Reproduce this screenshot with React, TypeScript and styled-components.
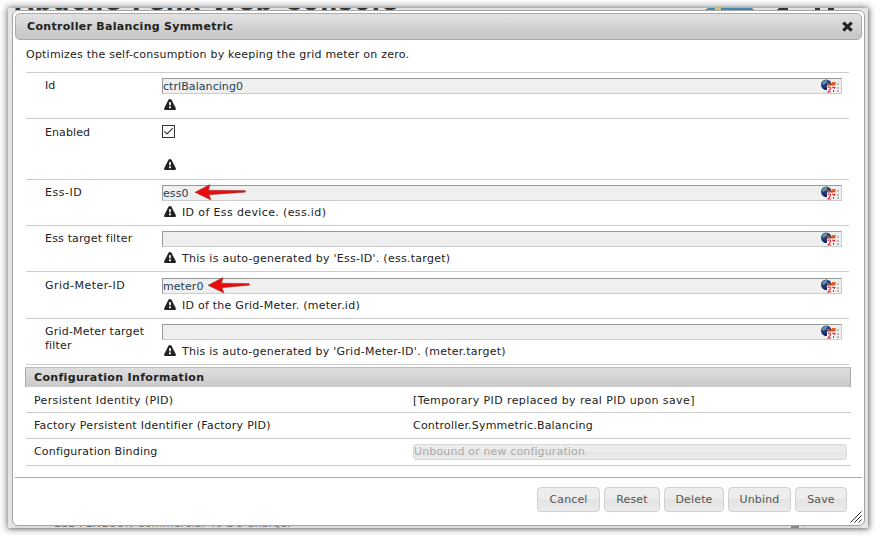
import React from 'react';
import styled, { createGlobalStyle } from 'styled-components';

const Global = createGlobalStyle`
  * { box-sizing: border-box; }
  body { margin: 0; background: #fff; font-family: "DejaVu Sans", Verdana, sans-serif; font-size: 11px; line-height: 14px; color: #222; overflow: hidden; }
`;

const Page = styled.div`
  width: 876px;
  height: 536px;
  padding: 8px;
`;

const Backdrop = styled.div`
  position: relative;
  width: 860px;
  height: 520px;
  padding: 2px 4px 2px 4px;
  background: #e4e4e4;
  box-shadow: 0 0 7px 1px rgba(0, 0, 0, 0.5), 1px 1px 3px rgba(0, 0, 0, 0.2);
`;

const Behind = styled.div`
  position: absolute;
  inset: 0;
  overflow: hidden;
`;

const BehindTitle = styled.div`
  position: absolute;
  left: 7px;
  top: -18px;
  font-size: 24px;
  line-height: 24px;
  font-weight: bold;
  letter-spacing: 1.25px;
  white-space: nowrap;
  color: #333;
`;

const BehindRow = styled.div`
  position: absolute;
  left: 7px;
  bottom: -3px;
  width: 846px;
  height: 14px;
  padding-left: 39px;
  white-space: nowrap;
  color: #777;
  background: #ddd;
  letter-spacing: 0.18px;
`;

const BehindArt = styled.svg`
  position: absolute;
  top: 0;
  left: 682px;
`;

const BehindCaret = styled.svg`
  position: absolute;
  right: 63px;
  bottom: 0;
`;

const Dialog = styled.div`
  position: relative;
  width: 853px;
  height: 516px;
  padding: 2px;
  background: #fff;
  border: 1px solid #a5a5a5;
  border-radius: 6px;
  display: flex;
  flex-direction: column;
`;

const TitleBar = styled.div`
  height: 27px;
  flex: none;
  padding: 0 8px 0 11px;
  display: flex;
  align-items: center;
  justify-content: space-between;
  border: 1px solid #aaa;
  border-radius: 5px;
  background: linear-gradient(#e2e2e2, #c8c8c8 85%);
  font-weight: bold;
`;

const Text = styled.span<{ $ls?: number }>`
  white-space: nowrap;
  letter-spacing: ${(p) => p.$ls ?? 0}px;
`;

const Body = styled.div`
  height: 437px;
  flex: none;
  padding: 0 10px;
`;

const Intro = styled.p`
  margin: 0;
  height: 32px;
  padding: 8px 1px 0;
`;

const Fields = styled.div`
  margin: 0 3px 0 1px;
  border-top: 1px solid #ccc;
`;

const FieldRow = styled.div<{ $h: number; $top: number }>`
  display: grid;
  grid-template-columns: 117px 680px;
  height: ${(p) => p.$h}px;
  padding: ${(p) => p.$top}px 0 0 19px;
  border-bottom: 1px solid #ccc;
`;

const Label = styled.div`
  padding-top: 1px;
`;

const Control = styled.div`
  display: flex;
  flex-direction: column;
`;

const Input = styled.div`
  height: 16px;
  flex: none;
  display: flex;
  align-items: center;
  background: #efefef;
  border: 1px solid #ccc;
  border-top-color: #999;
  border-left-color: #999;
  color: #1c4257;

  > span {
    padding-top: 1px;
  }

  > svg:last-child {
    margin-left: auto;
    margin-right: 2px;
  }
`;

const Check = styled.div`
  width: 13px;
  height: 13px;
  margin-bottom: 16px;
  border: 1px solid #333;
  display: flex;
`;

const Hint = styled.div`
  display: flex;
  align-items: flex-start;
  height: 14px;
  margin-top: 5px;
  padding-left: 2px;
  gap: 6px;
`;

const Section = styled.div`
  height: 20px;
  margin-top: 2px;
  margin-right: 1px;
  padding: 3px 8px;
  border: 1px solid #aaa;
  border-top-color: #bbb;
  border-bottom: 0;
  background: linear-gradient(#dedede, #c9c9c9);
  font-weight: bold;
`;

const InfoRow = styled.div<{ $h: number; $top?: number }>`
  display: grid;
  grid-template-columns: 379px 434px;
  height: ${(p) => p.$h}px;
  margin: 0 1px;
  padding: ${(p) => p.$top ?? 6}px 0 0 8px;
  border-bottom: 1px solid #ccc;
`;

const Binding = styled.div`
  height: 16px;
  margin-top: -1px;
  display: flex;
  align-items: center;
  border: 1px solid #d8d8d8;
  border-radius: 3px;
  background: linear-gradient(#ececec 50%, #e4e4e4 50%, #ebebeb);
  color: #aaa;
`;

const Footer = styled.div`
  flex: 1;
  display: flex;
  justify-content: flex-end;
  align-items: flex-start;
  gap: 4px;
  padding: 9px 15px 0 0;
  border-top: 1px solid #aaa;
`;

const Button = styled.button<{ $w: number }>`
  width: ${(p) => p.$w}px;
  height: 25px;
  padding: 0;
  border: 1px solid #d0d0d0;
  border-radius: 4px;
  background: linear-gradient(#ededed 50%, #e3e3e3 50%, #ebebeb);
  color: #555;
  font: 11px/14px "DejaVu Sans", Verdana, sans-serif;
  letter-spacing: 0.15px;
`;

const Grip = styled.svg`
  position: absolute;
  right: 2px;
  bottom: 2px;
`;

const CloseIcon = () => (
  <svg width="11" height="11" viewBox="0 0 11 11">
    <path d="M2.4 2.6 8.6 8.6M8.6 2.6 2.4 8.6" stroke="#222" strokeWidth="3.1" strokeLinecap="square" />
  </svg>
);

const WarnIcon = () => (
  <svg width="12" height="11" viewBox="0 0 12 11">
    <path d="M4.6 .6Q6-.5 7.4 .6L11.8 9.3Q12.2 11 11 11H1Q-.2 11 .2 9.3Z" fill="#222" />
    <path d="M5 3.2h2L6.7 6.6H5.3ZM5 7.6h2v1.6H5Z" fill="#fff" />
  </svg>
);

const FieldIcon = () => (
  <svg width="18" height="14" viewBox="0 0 18 14">
    <circle cx="5.3" cy="5.8" r="5.3" fill="#203b78" />
    <path d="M1 4Q3 .5 6.5 1.2Q7 3 4 5Q1 7 1 4Z" fill="#6594ae" />
    <path d="M2 8Q4 10 7 9L5 11Q2 10 2 8Z" fill="#14194e" />
    <path d="M5 4.5 8 3.5 10 5 12 3H15V6L11 7.2 7 6.5Z" fill="#bd4a1c" />
    <path d="M11 3h4v2h-4z" fill="#e56a24" />
    <path d="M6 6.5h8V14H6z" fill="#fff" />
    <path d="M7 9Q7 7.8 8.3 7.8 9.6 7.8 9.6 9 9.6 10 7 13H10M11 8.2h2.8L12.8 10M12.5 11v2" fill="none" stroke="#e91520" strokeWidth="1.1" />
    <path d="M14 4h1v2h-1zM16 4h2v2h-2zM16 8h2v2h-2zM16 11h2v2h-2zM14 8h1v1h-1z" fill="#bbb" />
  </svg>
);

const Arrow = styled.svg<{ $left: number }>`
  flex: none;
  margin: -1px 0 0 ${(p) => p.$left}px;
  overflow: visible;
`;

const RedArrow = ({ left, length }: { left: number; length: number }) => (
  <Arrow $left={left} width={length} height="17" viewBox={`0 0 ${length} 17`}>
    <path
      d={`M0 8.3 15 .5 13.5 6.2 ${length - 1} 6.6Q${length + 0.5} 7.4 ${length - 1} 8.2L14 10.7 16 16Z`}
      fill="#e80c0c"
      stroke="#8f3030"
      strokeOpacity=".6"
      strokeWidth=".8"
    />
  </Arrow>
);

type Field = {
  label: React.ReactNode;
  labelLs?: number;
  h: number;
  top?: number;
  value?: string;
  hint?: string;
  hintLs?: number;
  check?: boolean;
  arrow?: [number, number];
};

const fields: Field[] = [
  { label: 'Id', h: 46, value: 'ctrlBalancing0' },
  { label: 'Enabled', labelLs: 0.1, h: 61, top: 6, check: true },
  { label: 'Ess-ID', labelLs: 0.5, h: 46, value: 'ess0', hint: 'ID of Ess device. (ess.id)', hintLs: 0.37, arrow: [6, 51] },
  { label: 'Ess target filter', labelLs: 0.18, h: 46, hint: "This is auto-generated by 'Ess-ID'. (ess.target)", hintLs: 0.27 },
  { label: 'Grid-Meter-ID', labelLs: 0.49, h: 47, top: 6, value: 'meter0', hint: 'ID of the Grid-Meter. (meter.id)', hintLs: 0.25, arrow: [4, 42] },
  { label: <>Grid-Meter target<br />filter</>, labelLs: 0.2, h: 46, hint: "This is auto-generated by 'Grid-Meter-ID'. (meter.target)", hintLs: 0.26 },
];

const buttons: [string, number][] = [
  ['Cancel', 63],
  ['Reset', 56],
  ['Delete', 60],
  ['Unbind', 63],
  ['Save', 52],
];

export default function App() {
  return (
    <Page>
      <Global />
      <Backdrop>
        <Behind>
          <BehindTitle>Apache Felix Web Console</BehindTitle>
          <BehindArt width="160" height="3" viewBox="0 0 160 3">
            <path d="M15 2 18 0H62L64 2Z" fill="#428aae" />
            <path d="M25 0h6v2h-6z" fill="#e4c269" />
            <path d="M87 2 89 0h9v2zM125 0h5v2h-5zM138 0h6v2h-6z" fill="#333" />
          </BehindArt>
          <BehindRow>ESS FENECON Commercial 40 DC Charger</BehindRow>
          <BehindCaret width="20" height="4" viewBox="0 0 20 4">
            <path d="M0 0v4M19 0v4" stroke="#bbb" />
            <path d="M6 2h3V0h2v2h3v2H6Z" fill="#888" />
          </BehindCaret>
        </Behind>
        <Dialog>
          <TitleBar>
            <Text $ls={0.31}>Controller Balancing Symmetric</Text>
            <CloseIcon />
          </TitleBar>
          <Body>
            <Intro><Text $ls={0.22}>Optimizes the self-consumption by keeping the grid meter on zero.</Text></Intro>
            <Fields>
              {fields.map((f, i) => (
                <FieldRow key={i} $h={f.h} $top={f.top ?? 5}>
                  <Label><Text $ls={f.labelLs}>{f.label}</Text></Label>
                  <Control>
                    {f.check ? (
                      <Check>
                        <svg width="11" height="11" viewBox="0 0 11 11">
                          <path d="M1.2 5.2 4 8 9.8 2.2" fill="none" stroke="#333" strokeWidth="1.1" />
                        </svg>
                      </Check>
                    ) : (
                      <Input>
                        {f.value && <Text $ls={0.07}>{f.value}</Text>}
                        {f.arrow && <RedArrow left={f.arrow[0]} length={f.arrow[1]} />}
                        <FieldIcon />
                      </Input>
                    )}
                    <Hint>
                      <WarnIcon />
                      {f.hint && <Text $ls={f.hintLs}>{f.hint}</Text>}
                    </Hint>
                  </Control>
                </FieldRow>
              ))}
            </Fields>
            <Section><Text $ls={0.34}>Configuration Information</Text></Section>
            <InfoRow $h={26} $top={7}>
              <Text $ls={0.36}>Persistent Identity (PID)</Text>
              <Text $ls={0.4}>[Temporary PID replaced by real PID upon save]</Text>
            </InfoRow>
            <InfoRow $h={26}>
              <Text $ls={0.27}>Factory Persistent Identifier (Factory PID)</Text>
              <Text $ls={0.2}>Controller.Symmetric.Balancing</Text>
            </InfoRow>
            <InfoRow $h={27}>
              <Text $ls={0.18}>Configuration Binding</Text>
              <Binding><Text $ls={0.14}>Unbound or new configuration</Text></Binding>
            </InfoRow>
          </Body>
          <Footer>
            {buttons.map(([label, w]) => (
              <Button key={label} $w={w}>{label}</Button>
            ))}
          </Footer>
          <Grip width="12" height="12" viewBox="0 0 12 12">
            <path d="M.5 11.5 11.5.5M4.5 11.5l7-7M8.5 11.5l3-3" stroke="#333" />
          </Grip>
        </Dialog>
      </Backdrop>
    </Page>
  );
}
